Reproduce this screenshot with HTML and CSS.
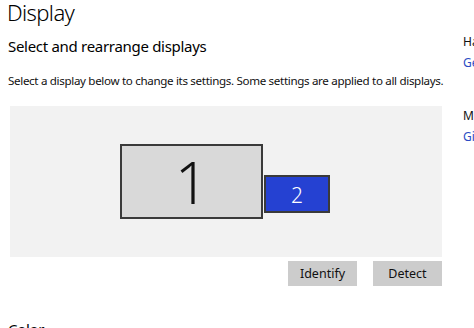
FILE: index.html
```html
<!DOCTYPE html>
<html lang="en">
<head>
  <meta charset="UTF-8">
  <meta name="viewport" content="width=device-width, initial-scale=1.0">
  <title>Display</title>
  <link rel="stylesheet" href="styles.css">
</head>
<body>

  <div id="page">
    <div id="main">
      <h1>Display</h1>
      <h2>Select and rearrange displays</h2>
      <p class="hint">Select a display below to change its settings. Some settings are applied to all displays.</p>

      <div id="arrange">
        <div class="monitor" id="monitor1">1</div>
        <div class="monitor selected" id="monitor2">2</div>
      </div>

      <div id="actions">
        <button class="action">Identify</button>
        <button class="action">Detect</button>
      </div>

      <h2 class="next">Color</h2>
    </div>

    <div id="side">
      <div class="side-group">
        <div class="side-title">Have a question?</div>
        <a class="side-link" href="#">Get help</a>
      </div>
      <div class="side-group">
        <div class="side-title">Make Windows better</div>
        <a class="side-link" href="#">Give us feedback</a>
      </div>
    </div>
  </div>

</body>
</html>
```

FILE: styles.css
```css
* {
  margin: 0;
  padding: 0;
  box-sizing: border-box;
}

body {
  font-family: "Noto Sans", "Open Sans", sans-serif;
  background: #fff;
  color: #000;
  width: 474px;
  height: 328px;
  overflow: hidden;
}

#page {
  display: flex;
  align-items: flex-start;
}

#main {
  width: 455px;
  flex-shrink: 0;
  padding-left: 8px;
}

h1 {
  font-weight: 300;
  font-size: 22px;
  letter-spacing: -0.6px;
  line-height: 24px;
  margin-left: -1px;
}

h2 {
  font-weight: 400;
  font-size: 15px;
  letter-spacing: -0.3px;
  line-height: 20px;
  margin-top: 12px;
}

.hint {
  font-size: 11.6px;
  letter-spacing: -0.33px;
  line-height: 16px;
  margin-top: 17px;
  white-space: nowrap;
  color: #111;
}

#arrange {
  position: relative;
  background: #f2f2f2;
  width: 432px;
  height: 151px;
  margin-top: 17px;
  margin-left: 2px;
}

/* monitors sit on a free canvas, like the real arrange view */
.monitor {
  position: absolute;
  display: flex;
  align-items: center;
  justify-content: center;
  border: 2px solid #3a3a3a;
  font-weight: 300;
}

#monitor1 {
  left: 110px;
  top: 38px;
  width: 143px;
  height: 75px;
  background: #d9d9d9;
  font-size: 58px;
  line-height: 1;
  color: #111;
}

#monitor2 {
  left: 254px;
  top: 69px;
  width: 66px;
  height: 38px;
  background: #2541d2;
  color: #fff;
  font-size: 21px;
  padding-top: 2px;
}

#actions {
  display: flex;
  justify-content: flex-end;
  gap: 16px;
  width: 434px;
  margin-top: 4px;
}

.action {
  font-family: inherit;
  font-size: 12.5px;
  background: #cccccc;
  color: #111;
  border: none;
  height: 25px;
  width: 69px;
}

.next {
  margin-top: 33px;
}

#side {
  padding-left: 8px;
  padding-top: 31px;
  white-space: nowrap;
}

.side-group {
  margin-bottom: 32px;
}

.side-title {
  font-size: 12px;
  line-height: 21px;
  color: #111;
}

.side-link {
  display: block;
  font-size: 12px;
  line-height: 21px;
  color: #2a4bc4;
  text-decoration: none;
}
```
